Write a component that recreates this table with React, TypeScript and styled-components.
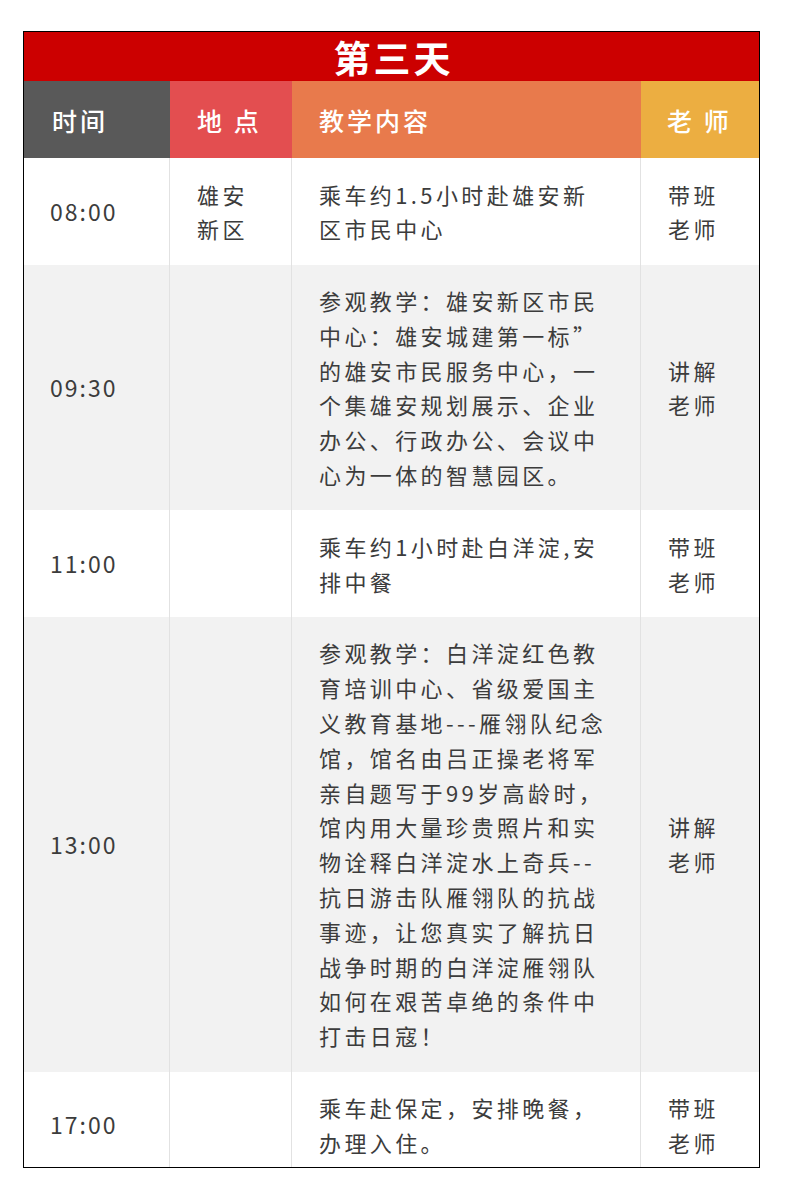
import * as React from "react";
import styled, { createGlobalStyle } from "styled-components";

const GlobalStyle = createGlobalStyle`
    html, body {
        margin: 0;
        padding: 0;
        background: #ffffff;
    }
    body {
        font-family: "Noto Sans CJK SC", "Noto Sans", sans-serif;
    }
`

const Page = styled.div`
    padding: 31px 0 30px 23px;
`

const Schedule = styled.div`
    width: 735px;
    border: 1px solid #000;
`

const DayTitle = styled.div`
    height: 49px;
    background-color: #cc0000;
    color: #fff;
    display: flex;
    align-items: center;
    justify-content: center;
    padding-left: 4px;
    font-size: 37px;
    font-weight: 700;
    letter-spacing: 3px;
`

const COLUMNS = "146px 122px 349px 118px";

const HeadRow = styled.div`
    display: grid;
    grid-template-columns: ${COLUMNS};
    height: 77px;
`

const HeadCell = styled.div<{ $bg: string; $indent?: number }>`
    background-color: ${p => p.$bg};
    color: #fff;
    display: flex;
    align-items: center;
    padding-left: ${p => p.$indent ?? 27}px;
    font-size: 25px;
    font-weight: 500;
    letter-spacing: 3px;
    white-space: pre;
`

const BodyRow = styled.div<{ $shaded: boolean; $last?: boolean }>`
    display: grid;
    grid-template-columns: ${COLUMNS};
    background-color: ${p => p.$shaded ? "#f2f2f2" : "#ffffff"};

    & > div {
        padding-top: ${p => p.$last ? 18.5 : 18.5}px;
        padding-bottom: ${p => p.$last ? 7 : 18.5}px;
    }
`

const Cell = styled.div<{ $divider?: boolean }>`
    display: flex;
    flex-direction: column;
    justify-content: center;
    padding-left: 27px;
    border-right: ${p => p.$divider === false ? "none" : "1px solid #e2e2e2"};
    color: #3c3c3c;
    font-size: 22px;
    line-height: 34.8px;
    letter-spacing: 3.4px;
`

const TimeText = styled.span`
    margin-left: -1px;
    letter-spacing: 2px;
    font-size: 23px;
`

const Line = styled.span`
    display: block;
    white-space: nowrap;
`

type Slot = {
    time: string,
    place: string[],
    content: string[],
    teacher: string[],
}

const slots: Slot[] = [
    {
        time: "08:00",
        place: ["雄安", "新区"],
        content: ["乘车约1.5小时赴雄安新", "区市民中心"],
        teacher: ["带班", "老师"],
    },
    {
        time: "09:30",
        place: [],
        content: [
            "参观教学：雄安新区市民",
            "中心：雄安城建第一标”",
            "的雄安市民服务中心，一",
            "个集雄安规划展示、企业",
            "办公、行政办公、会议中",
            "心为一体的智慧园区。",
        ],
        teacher: ["讲解", "老师"],
    },
    {
        time: "11:00",
        place: [],
        content: ["乘车约1小时赴白洋淀,安", "排中餐"],
        teacher: ["带班", "老师"],
    },
    {
        time: "13:00",
        place: [],
        content: [
            "参观教学：白洋淀红色教",
            "育培训中心、省级爱国主",
            "义教育基地---雁翎队纪念",
            "馆，馆名由吕正操老将军",
            "亲自题写于99岁高龄时，",
            "馆内用大量珍贵照片和实",
            "物诠释白洋淀水上奇兵--",
            "抗日游击队雁翎队的抗战",
            "事迹，让您真实了解抗日",
            "战争时期的白洋淀雁翎队",
            "如何在艰苦卓绝的条件中",
            "打击日寇！",
        ],
        teacher: ["讲解", "老师"],
    },
    {
        time: "17:00",
        place: [],
        content: ["乘车赴保定，安排晚餐，", "办理入住。"],
        teacher: ["带班", "老师"],
    },
];

const lines = (items: string[]) =>
    items.map((text, i) => <Line key={i}>{text}</Line>);

export default function App() {
    return (
        <Page>
            <GlobalStyle />
            <Schedule>
                <DayTitle>第三天</DayTitle>
                <HeadRow>
                    <HeadCell $bg="#595959" $indent={28}>时间</HeadCell>
                    <HeadCell $bg="#e34e50">地 点</HeadCell>
                    <HeadCell $bg="#e87a4c">教学内容</HeadCell>
                    <HeadCell $bg="#ecae41" $indent={26}>老 师</HeadCell>
                </HeadRow>
                {slots.map((slot, i) => (
                    <BodyRow key={slot.time} $shaded={i % 2 === 1} $last={i === slots.length - 1}>
                        <Cell><TimeText>{slot.time}</TimeText></Cell>
                        <Cell>{lines(slot.place)}</Cell>
                        <Cell>{lines(slot.content)}</Cell>
                        <Cell $divider={false}>{lines(slot.teacher)}</Cell>
                    </BodyRow>
                ))}
            </Schedule>
        </Page>
    )
}
